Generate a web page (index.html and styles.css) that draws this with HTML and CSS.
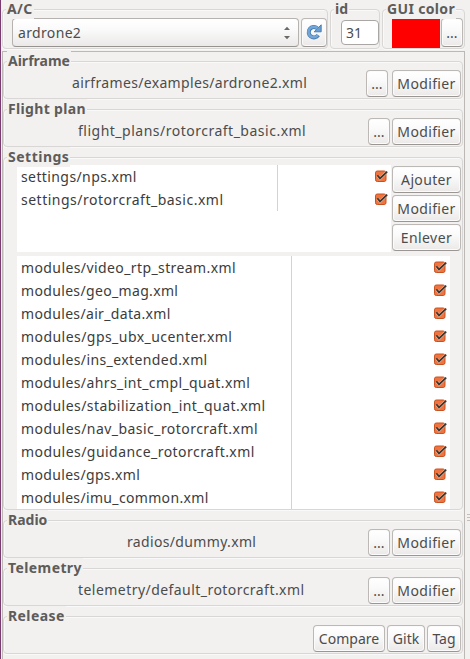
FILE: index.html
```html
<!DOCTYPE html>
<html lang="fr">
<head>
<meta charset="utf-8">
<title>ardrone2</title>
<link rel="stylesheet" href="styles.css">
</head>
<body>
<svg class="defs" width="0" height="0" aria-hidden="true">
  <symbol id="check" viewBox="0 0 13 12">
    <rect x=".5" y="1" width="10.5" height="10.5" rx="1.8" fill="#f0743f" stroke="#c9501f"/>
    <path d="M2.6 5.6 5 8.6 11.4 2.2" fill="none" stroke="#f7b99a" stroke-width="3"/>
    <path d="M2.4 5.2 5 8.4 12.2 1.6" fill="none" stroke="#3a3632" stroke-width="1.8"/>
  </symbol>
</svg>
<div class="window">
  <header class="top">
    <section class="frame frame-ac">
      <h2 class="ls4">A/C</h2>
      <div class="combo"><span class="ls3">ardrone2</span>
        <svg width="8" height="14" viewBox="0 0 8 14"><path d="M1 4 4 .8 7 4zM1 10 4 13.2 7 10z" fill="#6b6967"/></svg>
      </div>
      <button class="btn refresh" aria-label="refresh">
        <svg width="16" height="16" viewBox="0 0 16 16"><path d="M12.2 11.2A5.2 5.2 0 1 1 11.2 4.2" fill="none" stroke="#3f78b3" stroke-width="4"/><path d="M15.2.8V7.8H8.2z" fill="#6b9fd2" stroke="#3f78b3" stroke-width=".9"/><path d="M11.8 11.2A5.2 5.2 0 1 1 11.5 4.5" fill="none" stroke="#73a5d6" stroke-width="2.6"/></svg>
      </button>
    </section>
    <section class="frame frame-id"><h2>id</h2><div class="entry">31</div></section>
    <section class="frame frame-color"><h2 class="ls3">GUI color</h2><div class="swatch"></div><button class="btn dots">...</button></section>
  </header>
  <main class="panel">
    <section class="frame row"><h2>Airframe</h2><span class="path airframe ls3">airframes/examples/ardrone2.xml</span><button class="btn dots wide-gap">...</button><button class="btn modify">Modifier</button></section>
    <section class="frame row"><h2 class="ls3">Flight plan</h2><span class="path flight ls5">flight_plans/rotorcraft_basic.xml</span><button class="btn dots">...</button><button class="btn modify">Modifier</button></section>
    <section class="frame settings"><h2 class="ls5">Settings</h2>
      <div class="upper">
        <div class="list files">
          <div class="item"><span class="ls4">settings/nps.xml</span><svg class="check"><use href="#check"/></svg></div>
          <div class="item"><span class="ls5">settings/rotorcraft_basic.xml</span><svg class="check"><use href="#check"/></svg></div>
        </div>
        <div class="actions"><button class="btn ls3">Ajouter</button><button class="btn modify">Modifier</button><button class="btn ls4">Enlever</button></div>
      </div>
      <div class="list modules">
        <div class="item"><span class="ls4">modules/video_rtp_stream.xml</span><svg class="check"><use href="#check"/></svg></div>
        <div class="item"><span class="ls3">modules/geo_mag.xml</span><svg class="check"><use href="#check"/></svg></div>
        <div class="item"><span class="ls3">modules/air_data.xml</span><svg class="check"><use href="#check"/></svg></div>
        <div class="item"><span class="ls45">modules/gps_ubx_ucenter.xml</span><svg class="check"><use href="#check"/></svg></div>
        <div class="item"><span class="ls4">modules/ins_extended.xml</span><svg class="check"><use href="#check"/></svg></div>
        <div class="item"><span class="ls4">modules/ahrs_int_cmpl_quat.xml</span><svg class="check"><use href="#check"/></svg></div>
        <div class="item"><span class="ls45">modules/stabilization_int_quat.xml</span><svg class="check"><use href="#check"/></svg></div>
        <div class="item"><span class="ls45">modules/nav_basic_rotorcraft.xml</span><svg class="check"><use href="#check"/></svg></div>
        <div class="item"><span class="ls45">modules/guidance_rotorcraft.xml</span><svg class="check"><use href="#check"/></svg></div>
        <div class="item"><span class="ls3">modules/gps.xml</span><svg class="check"><use href="#check"/></svg></div>
        <div class="item"><span class="ls3">modules/imu_common.xml</span><svg class="check"><use href="#check"/></svg></div>
      </div>
    </section>
    <section class="frame row"><h2>Radio</h2><span class="path radio ls3">radios/dummy.xml</span><button class="btn dots">...</button><button class="btn modify">Modifier</button></section>
    <section class="frame row"><h2 class="ls4">Telemetry</h2><span class="path telemetry ls45">telemetry/default_rotorcraft.xml</span><button class="btn dots">...</button><button class="btn modify">Modifier</button></section>
    <section class="frame row release"><h2 class="ls4">Release</h2><button class="btn compare">Compare</button><button class="btn gitk">Gitk</button><button class="btn tag">Tag</button></section>
  </main>
  <div class="grip"><i></i><i></i><i></i></div>
</div>
</body>
</html>
```

FILE: styles.css
```css
* { box-sizing: border-box; }
body {
  margin: 0;
  background: #f2f1f0;
  color: #4c4c4c;
  font: 14px/20px "Noto Sans", "Open Sans", sans-serif;
}
.defs { position: absolute; }
.window {
  position: relative;
  width: 470px;
  height: 659px;
  overflow: hidden;
  border-left: 1px solid #7a3c70;
  padding: 9px 0 0 1px;
}
.frame {
  position: relative;
  display: flex;
  border: 1px solid #d9d7d5;
  border-radius: 4px;
  box-shadow: inset 1px 1px #faf9f9, 0 1px #faf9f9;
}
h2 {
  position: absolute;
  top: -11px;
  left: 3px;
  margin: 0;
  padding: 0 1px;
  background: #f2f1f0;
  color: #5e5c5a;
  font-size: 14px;
  line-height: 20px;
  font-weight: 700;
  white-space: nowrap;
}
.top { display: flex; gap: 2px; height: 40px; }
.frame-ac { width: 326px; padding: 8px 0 0 9px; gap: 2px; }
.frame-id { width: 50px; padding: 10px 0 0 10px; }
.frame-color { width: 83px; padding: 7px 0 0 9px; gap: 1px; }
.btn {
  display: flex;
  align-items: center;
  justify-content: center;
  height: 27px;
  margin: 0;
  padding: 0;
  border: 1px solid #bbb8b5;
  border-bottom-color: #999693;
  border-radius: 4px;
  background: linear-gradient(#fff, #fafafa 40%, #ebe9e8);
  color: #4c4c4c;
  font: inherit;
  box-shadow: inset 0 0 0 1px #fbfbfb;
}
.combo {
  display: flex;
  align-items: center;
  justify-content: space-between;
  width: 287px;
  height: 29px;
  padding: 0 7px 0 5px;
  border: 1px solid #b5b2af;
  border-bottom-color: #959290;
  border-radius: 4px;
  background: linear-gradient(#fff, #fafafa 40%, #ebe9e8);
}
.refresh { width: 26px; height: 29px; padding-right: 1px; padding-bottom: 2px; }
.entry {
  width: 38px;
  height: 25px;
  padding: 2px 4px;
  border: 1px solid #a9a6a3;
  border-radius: 4px;
  background: #fff;
}
.swatch { width: 48px; height: 31px; background: #f00; }
.dots { width: 22px; }
.frame-color .dots { height: 29px; margin-top: 1px; }
.panel {
  width: 463px;
  margin-top: 2px;
  height: 620px;
  border: 1px solid #bbb8b5;
  border-bottom: 0;
  padding: 9px 1px 0 0;
}
.panel .frame { height: 38px; margin-bottom: 10px; }
.row { justify-content: flex-end; gap: 2px; padding: 8px 1px 0 0; }
.path { margin: 3px auto 0 0; white-space: nowrap; }
.airframe { margin-left: 68px; }
.flight, .telemetry { margin-left: 74px; }
.radio { margin-left: 123px; }
.wide-gap { margin-right: 2px; }
.modify { width: 69px; letter-spacing: .35px; }
.ls3 { letter-spacing: .34px; }
.ls4 { letter-spacing: .4px; }
.ls45 { letter-spacing: .45px; }
.ls5 { letter-spacing: .5px; }
.panel .settings { display: block; height: 353px; padding: 7px 0 0 13px; }
.upper { display: flex; gap: 1px; height: 87px; margin-bottom: 4px; }
.list { background: #fff; color: #3c3c3c; }
.files { width: 374px; }
.modules { width: 433px; height: 253px; }
.actions { display: grid; gap: 2px; width: 69px; padding-top: 1px; align-content: start; }
.item { display: flex; height: 23px; padding: 0 3px 0 4px; align-items: center; justify-content: space-between; }
.item span { height: 23px; line-height: 23px; white-space: nowrap; }
.files .item span { width: 257px; border-right: 1px solid #d5d3d1; }
.modules .item span { width: 271px; border-right: 1px solid #d5d3d1; }
.check { width: 13px; height: 12px; margin-bottom: 1px; }
.compare { width: 72px; }
.gitk { width: 38px; }
.tag { width: 34px; }
.grip {
  position: absolute;
  right: 0;
  top: 514px;
  display: grid;
  gap: 2px;
}
.grip i { width: 3px; height: 1px; background: #c1bebc; }
```
